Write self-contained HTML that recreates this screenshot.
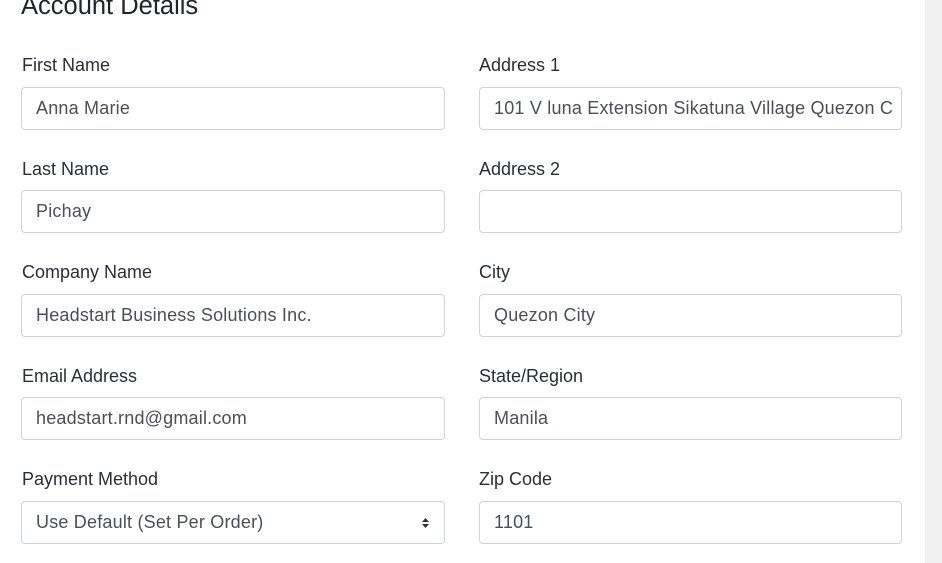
<!DOCTYPE html>
<html><head><style>
body{margin:0;width:942px;height:563px;background:#fff;overflow:hidden;font-family:"Liberation Sans",sans-serif;position:relative;color:#212529}
.strip{position:absolute;left:925px;top:0;width:17px;height:563px;background:#f0f0f0}
h2{position:absolute;left:21px;top:-8px;margin:0;font-weight:400;font-size:25.5px;color:#212529}
.l{position:absolute;font-size:18px;color:#2b2f33}
.i{position:absolute;height:41px;border:1px solid #ced4da;border-radius:4px;background:#fff;font-size:18px;color:#495057;line-height:41px;padding-left:14px;box-sizing:content-box;white-space:nowrap;overflow:hidden;letter-spacing:0.2px}
.a{left:21px;width:408px}.b{left:479px;width:407px}
</style></head><body>
<div class="strip"></div>
<h2>Account Details</h2>
<div class="l" style="left:22px;top:55px">First Name</div>
<div class="l" style="left:479px;top:55px">Address 1</div>
<div class="i a" style="top:87px">Anna Marie</div>
<div class="i b" style="top:87px">101 V luna Extension Sikatuna Village Quezon C</div>
<div class="l" style="left:22px;top:159px">Last Name</div>
<div class="l" style="left:479px;top:159px">Address 2</div>
<div class="i a" style="top:190px">Pichay</div>
<div class="i b" style="top:190px"></div>
<div class="l" style="left:22px;top:262px">Company Name</div>
<div class="l" style="left:479px;top:262px">City</div>
<div class="i a" style="top:294px">Headstart Business Solutions Inc.</div>
<div class="i b" style="top:294px">Quezon City</div>
<div class="l" style="left:22px;top:366px">Email Address</div>
<div class="l" style="left:479px;top:366px">State/Region</div>
<div class="i a" style="top:397px">headstart.rnd@gmail.com</div>
<div class="i b" style="top:397px">Manila</div>
<div class="l" style="left:22px;top:469px">Payment Method</div>
<div class="l" style="left:479px;top:469px">Zip Code</div>
<div class="i a" style="top:501px">Use Default (Set Per Order)<svg style="position:absolute;left:399px;top:15px" width="9" height="12" viewBox="0 0 9 12"><path d="M1 5L4.5 1L8 5ZM1 7L4.5 11L8 7Z" fill="#333"/></svg></div>
<div class="i b" style="top:501px">1101</div>
</body></html>
